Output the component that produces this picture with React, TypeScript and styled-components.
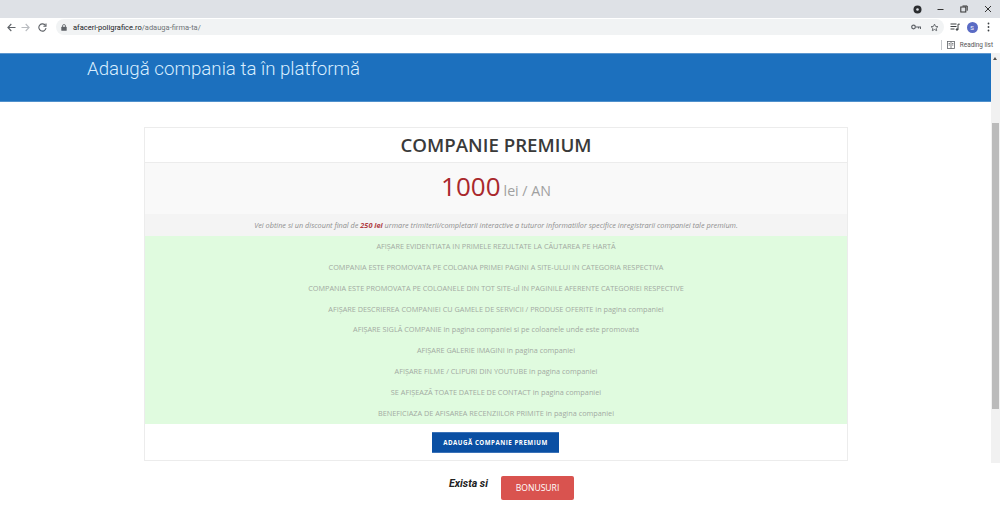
import React from "react";
import styled, { createGlobalStyle } from "styled-components";

const Global = createGlobalStyle`
  html, body { margin: 0; padding: 0; background: #fff; height: 526px; overflow: hidden; }
  * { box-sizing: border-box; }
  #root { font-family: "Open Sans", "Liberation Sans", sans-serif; }
`;

const Shell = styled.div`
  position: relative;
  width: 1000px;
  height: 526px;
  overflow: hidden;
  background: #fff;
`;

const TabStrip = styled.div`
  height: 18px;
  background: #dee1e6;
  display: flex;
  justify-content: flex-end;
  align-items: center;
  color: #3c4043;
`;

const WinButton = styled.span<{ $w?: number }>`
  width: ${(p) => p.$w ?? 26}px;
  height: 14px;
  display: flex;
  align-items: center;
  justify-content: center;
`;

const Toolbar = styled.div`
  height: 18px;
  background: #fff;
  display: flex;
  align-items: center;
  padding-left: 6px;
`;

const NavIcon = styled.span<{ $w?: number }>`
  width: ${(p) => p.$w ?? 17}px;
  height: 18px;
  display: flex;
  align-items: center;
  justify-content: center;
  flex: none;
`;

const Omnibox = styled.div`
  width: 888px;
  margin-left: 5px;
  margin-right: 3px;
  height: 16px;
  flex: none;
  background: #f1f3f4;
  border-radius: 8px;
  display: flex;
  align-items: center;
  padding-left: 5px;
  padding-right: 5px;
`;

const Url = styled.span`
  font-family: "Roboto", sans-serif;
  font-size: 7.5px;
  color: #202124;
  margin-left: 6px;
  flex: 1;
  white-space: nowrap;
`;

const UrlPath = styled.span`
  color: #6f7377;
`;

const Avatar = styled.span`
  width: 11px;
  height: 11px;
  border-radius: 50%;
  background: #5a6bc4;
  color: #fff;
  font-family: "Roboto", sans-serif;
  font-size: 6px;
  display: flex;
  align-items: center;
  justify-content: center;
`;

const BookmarkBar = styled.div`
  height: 17px;
  background: #fff;
  display: flex;
  align-items: center;
  justify-content: flex-end;
  padding-right: 7px;
`;

const Divider = styled.span`
  width: 1px;
  height: 10px;
  background: #c4c7cb;
  margin-right: 5px;
`;

const ReadingLabel = styled.span`
  font-family: "Roboto", sans-serif;
  font-size: 6.4px;
  color: #555;
  margin-left: 5px;
`;

const Hero = styled.header`
  height: 49px;
  width: 991px;
  background: #1c70be;
  border-top: 1px solid #5d97cf;
  border-bottom: 1px solid #4f90cc;
  padding: 4px 0 0 87px;
`;

const HeroTitle = styled.h1`
  margin: 0;
  font-family: "Roboto", sans-serif;
  font-weight: 300;
  font-size: 18.7px;
  line-height: 22px;
  color: #d9eeff;
`;

const Card = styled.section`
  width: 704px;
  margin: 25px 0 0 144px;
  border: 1px solid #ececec;
`;

const CardTitle = styled.h2`
  margin: 0;
  height: 35px;
  border-bottom: 1px solid #ececec;
  text-align: center;
  font-size: 18.7px;
  line-height: 34px;
  font-weight: 600;
  color: #3a3a3a;
`;

const PriceRow = styled.div`
  height: 51px;
  background: #f9f9f9;
  display: flex;
  align-items: baseline;
  justify-content: center;
  padding-top: 3px;
  color: #a0a0a0;
  font-size: 14.2px;
  line-height: 40px;
`;

const Amount = styled.span`
  font-size: 26px;
  color: #a9282c;
  margin-right: 3px;
`;

const Note = styled.p`
  margin: 0;
  height: 22px;
  background: #f4f4f4;
  text-align: center;
  font-size: 7.3px;
  line-height: 22px;
  font-style: italic;
  color: #8f8f8f;
`;

const NoteStrong = styled.strong`
  color: #b04045;
  font-weight: 700;
`;

const Features = styled.ul`
  margin: 0;
  padding: 0;
  list-style: none;
  height: 188px;
  background: #e0fbdf;
`;

const Feature = styled.li`
  height: 20.85px;
  text-align: center;
  font-size: 7.3px;
  line-height: 20.85px;
  color: #a2aaa2;
  white-space: nowrap;
`;

const ActionRow = styled.div`
  height: 36px;
  padding: 8px 1px 0 0;
  display: flex;
  justify-content: center;
  align-items: flex-start;
`;

const PrimaryButton = styled.button`
  width: 127px;
  height: 21px;
  padding: 0;
  border: 0;
  border-top: 1px solid #3a72b8;
  border-bottom: 1px solid #3a72b8;
  background: #0a4fa3;
  color: #fff;
  font-family: "Open Sans", sans-serif;
  font-size: 6.2px;
  font-weight: 700;
  letter-spacing: 0.5px;
`;

const BonusRow = styled.div`
  display: flex;
  justify-content: flex-start;
  align-items: flex-start;
  margin: 15px 0 0 449px;
`;

const BonusLabel = styled.em`
  font-family: "Roboto", sans-serif;
  font-size: 10.7px;
  font-weight: 700;
  font-style: italic;
  color: #222;
  margin-top: 1px;
  width: 52px;
  line-height: 14px;
`;

const BonusButton = styled.button`
  width: 73px;
  height: 24px;
  padding: 0;
  border: 0;
  border-radius: 2px;
  background: #d9534f;
  color: #fff;
  font-family: "Open Sans", sans-serif;
  font-size: 8.6px;
  font-weight: 400;
`;

const ScrollTrack = styled.div`
  position: absolute;
  left: 991px;
  top: 53px;
  width: 9px;
  height: 410px;
  background: #f1f1f1;
`;

const ScrollArrow = styled.span`
  position: absolute;
  left: 2px;
  top: 4px;
  width: 0;
  height: 0;
  border-left: 2.5px solid transparent;
  border-right: 2.5px solid transparent;
  border-bottom: 3px solid #505050;
`;

const ScrollThumb = styled.div`
  position: absolute;
  left: 1px;
  top: 70px;
  width: 7px;
  height: 286px;
  background: #bbb;
`;

const features: string[] = [
  "AFIȘARE EVIDENTIATA IN PRIMELE REZULTATE LA CĂUTAREA PE HARTĂ",
  "COMPANIA ESTE PROMOVATA PE COLOANA PRIMEI PAGINI A SITE-ULUI IN CATEGORIA RESPECTIVA",
  "COMPANIA ESTE PROMOVATA PE COLOANELE DIN TOT SITE-ul IN PAGINILE AFERENTE CATEGORIEI RESPECTIVE",
  "AFIȘARE DESCRIEREA COMPANIEI CU GAMELE DE SERVICII / PRODUSE OFERITE in pagina companiei",
  "AFIȘARE SIGLĂ COMPANIE in pagina companiei si pe coloanele unde este promovata",
  "AFIȘARE GALERIE IMAGINI in pagina companiei",
  "AFIȘARE FILME / CLIPURI DIN YOUTUBE in pagina companiei",
  "SE AFIȘEAZĂ TOATE DATELE DE CONTACT in pagina companiei",
  "BENEFICIAZA DE AFISAREA RECENZIILOR PRIMITE in pagina companiei",
];

export default function App() {
  return (
    <Shell>
      <Global />
      <TabStrip>
        <WinButton $w={14}>
          <svg width="9" height="9" viewBox="0 0 9 9">
            <circle cx="4.5" cy="4.5" r="4" fill="#2b2d30" />
            <circle cx="4.5" cy="4.5" r="1.3" fill="#dee1e6" />
          </svg>
        </WinButton>
        <WinButton $w={4} />
        <WinButton $w={24}>
          <svg width="7" height="7" viewBox="0 0 7 7"><path d="M0.5 3.5h6" stroke="#333" /></svg>
        </WinButton>
        <WinButton $w={24}>
          <svg width="8" height="8" viewBox="0 0 8 8" fill="none" stroke="#333" strokeWidth="1">
            <rect x="0.8" y="2" width="5" height="5" />
            <path d="M2.5 1h4.700v4.700" />
          </svg>
        </WinButton>
        <WinButton $w={24}>
          <svg width="8" height="8" viewBox="0 0 8 8"><path d="M1 1l6 6M7 1L1 7" stroke="#333" /></svg>
        </WinButton>
      </TabStrip>
      <Toolbar>
        <NavIcon $w={11}>
          <svg width="9" height="9" viewBox="0 0 9 9" fill="none" stroke="#5f6368" strokeWidth="1.1">
            <path d="M8.5 4.5H1M4.3 1L0.9 4.5 4.3 8" />
          </svg>
        </NavIcon>
        <NavIcon>
          <svg width="9" height="9" viewBox="0 0 9 9" fill="none" stroke="#b9bcc0" strokeWidth="1.1">
            <path d="M0.5 4.5H8M4.7 1l3.4 3.5L4.7 8" />
          </svg>
        </NavIcon>
        <NavIcon>
          <svg width="9" height="9" viewBox="0 0 9 9" fill="none" stroke="#5f6368" strokeWidth="1.1">
            <path d="M7.5 2.6A3.6 3.6 0 1 0 8 5" />
            <path d="M8 0.6v2.6H5.4" />
          </svg>
        </NavIcon>
        <Omnibox>
          <svg width="6" height="7" viewBox="0 0 6 7" style={{ flex: "none" }}>
            <rect x="0.3" y="2.8" width="5.4" height="4" rx="0.6" fill="#5f6368" />
            <path d="M1.5 3V2a1.5 1.500 0 0 1 3 0v1" fill="none" stroke="#5f6368" strokeWidth="0.8" />
          </svg>
          <Url>
            afaceri-poligrafice.ro<UrlPath>/adauga-firma-ta/</UrlPath>
          </Url>
          <svg width="10" height="6" viewBox="0 0 10 6" style={{ marginRight: 9 }}>
            <circle cx="2.5" cy="3" r="1.8" fill="none" stroke="#5f6368" strokeWidth="1.2" />
            <path d="M4.3 3H9.5V5M7.5 3v1.6" fill="none" stroke="#5f6368" strokeWidth="1.1" />
          </svg>
          <svg width="9" height="9" viewBox="0 0 24 24" fill="none" stroke="#5f6368" strokeWidth="2.4">
            <path d="M12 3l2.8 6 6.5.7-4.8 4.4 1.3 6.4L12 17.3l-5.800 3.200 1.300-6.400L2.700 9.700 9.200 9z" />
          </svg>
        </Omnibox>
        <NavIcon $w={16}>
          <svg width="10" height="8" viewBox="0 0 10 8" fill="none" stroke="#3c4043" strokeWidth="1">
            <path d="M0.500 1H6.500M0.500 3.500H6.500M0.500 6H4.500" />
            <path d="M8 6.500V1.200H9.800" />
            <circle cx="7" cy="6.500" r="0.800" fill="#3c4043" />
          </svg>
        </NavIcon>
        <NavIcon $w={18}><Avatar>S</Avatar></NavIcon>
        <NavIcon $w={14}>
          <svg width="3" height="10" viewBox="0 0 3 10" fill="#3c4043">
            <circle cx="1.500" cy="1.500" r="0.900" />
            <circle cx="1.500" cy="5" r="0.900" />
            <circle cx="1.500" cy="8.500" r="0.900" />
          </svg>
        </NavIcon>
      </Toolbar>
      <BookmarkBar>
        <Divider />
        <svg width="8" height="8" viewBox="0 0 8 8" fill="none" stroke="#5f6368" strokeWidth="0.8">
          <rect x="0.500" y="0.500" width="7" height="7" />
          <path d="M4 0.500V7.500M1.600 2.500H3M1.600 4H3M5 2.500H6.400M5 4H6.400" />
        </svg>
        <ReadingLabel>Reading list</ReadingLabel>
      </BookmarkBar>
      <Hero>
        <HeroTitle>Adaugă compania ta în platformă</HeroTitle>
      </Hero>
      <Card>
        <CardTitle>COMPANIE PREMIUM</CardTitle>
        <PriceRow>
          <Amount>1000</Amount> lei / AN
        </PriceRow>
        <Note>
          Vei obtine si un discount final de <NoteStrong>250 lei</NoteStrong> urmare trimiterii/completarii interactive a tuturor informatiilor specifice inregistrarii companiei tale premium.
        </Note>
        <Features>
          {features.map((f) => (
            <Feature key={f}>{f}</Feature>
          ))}
        </Features>
        <ActionRow>
          <PrimaryButton>ADAUGĂ COMPANIE PREMIUM</PrimaryButton>
        </ActionRow>
      </Card>
      <BonusRow>
        <BonusLabel>Exista si</BonusLabel>
        <BonusButton>BONUSURI</BonusButton>
      </BonusRow>
      <ScrollTrack>
        <ScrollArrow />
        <ScrollThumb />
      </ScrollTrack>
    </Shell>
  );
}
